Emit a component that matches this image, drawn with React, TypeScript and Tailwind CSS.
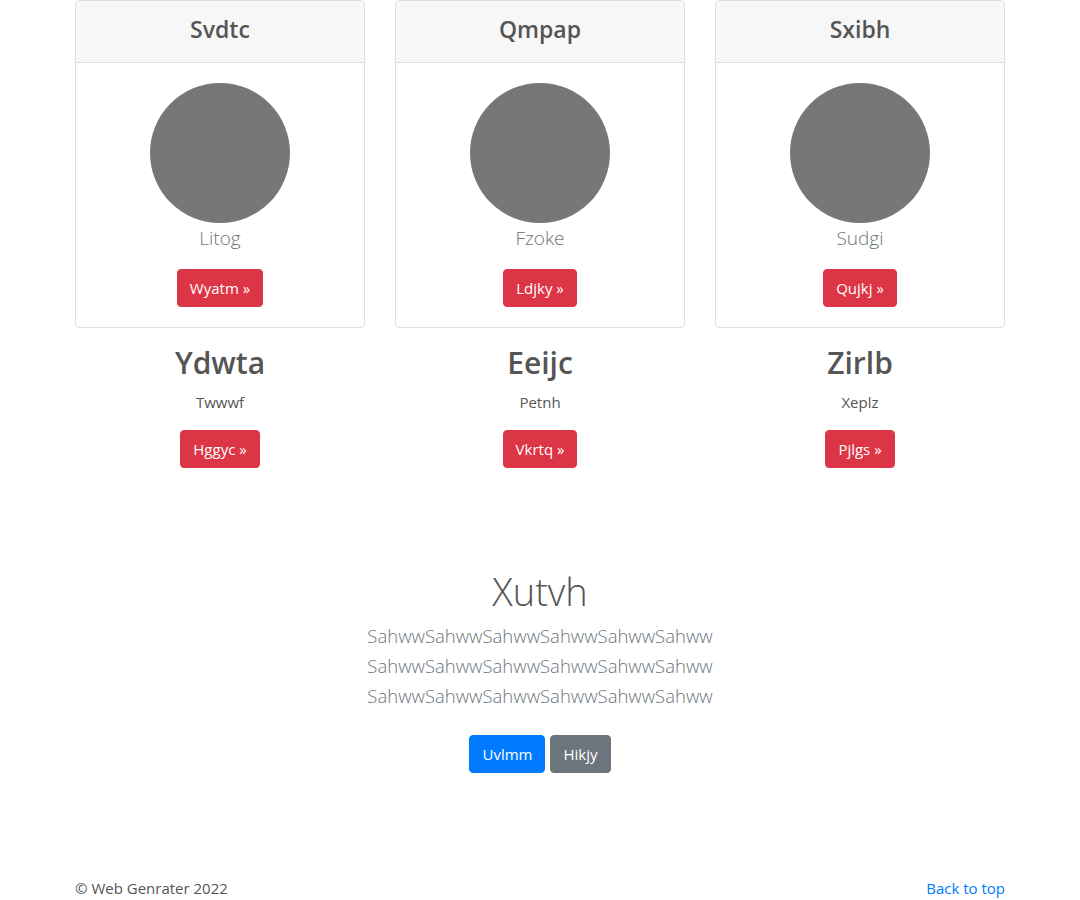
const cards = [
  { title: 'Svdtc', lead: 'Litog', btn: 'Wyatm' },
  { title: 'Qmpap', lead: 'Fzoke', btn: 'Ldjky' },
  { title: 'Sxibh', lead: 'Sudgi', btn: 'Qujkj' },
];

const features = [
  { title: 'Ydwta', text: 'Twwwf', btn: 'Hggyc' },
  { title: 'Eeijc', text: 'Petnh', btn: 'Vkrtq' },
  { title: 'Zirlb', text: 'Xeplz', btn: 'Pjlgs' },
];

const leadLine = 'SahwwSahwwSahwwSahwwSahwwSahww';

function RedButton({ label }: { label: string }) {
  return (
    <a className="inline-block rounded-[4px] border border-[#dc3545] bg-[#dc3545] px-3 py-1.5 text-[15px] leading-6 text-white">
      {label} »
    </a>
  );
}

export default function App() {
  return (
    <div className="min-h-[900px] bg-white text-[16px] leading-6 text-[#555]" style={{ fontFamily: '"Segoe UI", "Open Sans", sans-serif' }}>
      <div className="mx-auto w-[960px] px-[15px]">
        <div className="grid grid-cols-3 gap-[30px]">
          {cards.map((card) => (
            <div key={card.title} className="overflow-hidden rounded-[4px] border border-[#dfdfdf]">
              <div className="border-b border-[#dfdfdf] bg-[#f7f7f7] px-5 pt-[14px] pb-[10px]">
                <h4 className="mb-2 text-center text-[23px] font-semibold leading-[29px]">{card.title}</h4>
              </div>
              <div className="p-5 text-center">
                <div className="mx-auto h-[140px] w-[140px] rounded-full bg-[#777]" />
                <p className="mb-4 text-[19px] font-light leading-[30px] text-[#6c757d]">{card.lead}</p>
                <RedButton label={card.btn} />
              </div>
            </div>
          ))}
        </div>

        <div className="mt-4 grid grid-cols-3 gap-[30px]">
          {features.map((f) => (
            <div key={f.title} className="text-center">
              <h2 className="mb-2 text-[30px] font-semibold leading-[38px]">{f.title}</h2>
              <p className="mb-4 text-[15px] leading-6">{f.text}</p>
              <RedButton label={f.btn} />
            </div>
          ))}
        </div>
      </div>

      <section className="mt-[99px] text-center">
        <h1 className="mb-1.5 text-[38px] font-light leading-[48px]">Xutvh</h1>
        <p className="mb-4 text-[18.5px] font-light leading-[30px] text-[#6c757d]">
          {leadLine}
          <br />
          {leadLine}
          <br />
          {leadLine}
        </p>
        <p className="flex justify-center gap-[5px] py-2">
          <a className="inline-block rounded-[4px] border border-[#007bff] bg-[#007bff] px-3 py-1.5 text-[15px] text-white">Uvlmm</a>
          <a className="inline-block rounded-[4px] border border-[#6c757d] bg-[#6c757d] px-3 py-1.5 text-[15px] text-white">Hikjy</a>
        </p>
      </section>

      <footer className="mx-auto mt-[95px] flex w-[960px] justify-between px-[15px] text-[15px]">
        <p>© Web Genrater 2022</p>
        <a className="text-[#007bff]">Back to top</a>
      </footer>
    </div>
  );
}
